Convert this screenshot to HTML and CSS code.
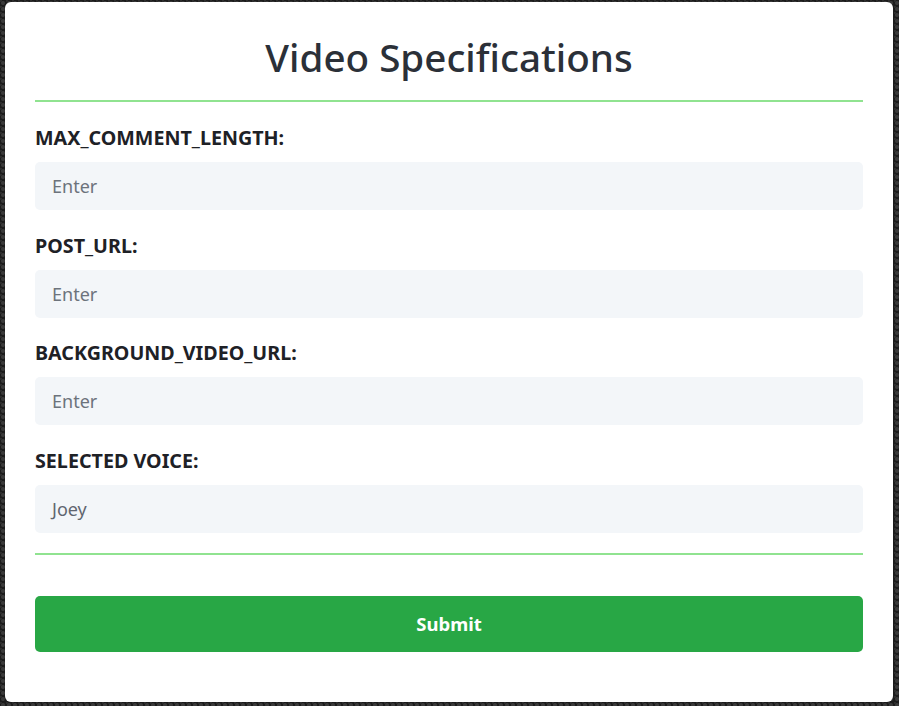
FILE: index.html
```html
<!DOCTYPE html>
<html lang="en">
<head>
<meta charset="utf-8">
<title>Video Specifications</title>
<link rel="stylesheet" href="styles.css">
</head>
<body>
<div class="card">
  <h1 class="title">Video Specifications</h1>
  <hr class="rule">
  <form class="form">
    <div class="group">
      <label class="label" for="f1">MAX_COMMENT_LENGTH:</label>
      <input class="input" id="f1" type="text" placeholder="Enter">
    </div>
    <div class="group">
      <label class="label" for="f2">POST_URL:</label>
      <input class="input" id="f2" type="text" placeholder="Enter">
    </div>
    <div class="group">
      <label class="label" for="f3">BACKGROUND_VIDEO_URL:</label>
      <input class="input" id="f3" type="text" placeholder="Enter">
    </div>
    <div class="group">
      <label class="label" for="f4">SELECTED VOICE:</label>
      <div class="input select">Joey</div>
    </div>
    <hr class="rule rule-bottom">
    <button class="submit" type="button">Submit</button>
  </form>
</div>
</body>
</html>
```

FILE: styles.css
```css
* { box-sizing: border-box; }
html, body { margin: 0; }
body {
  width: 899px;
  height: 706px;
  overflow: hidden;
  padding: 2px 0 0 5px;
  background-color: #1c1c1c;
  background-image:
    radial-gradient(circle at 50% 50%, #3a3a3a 0 1.5px, transparent 2.5px),
    radial-gradient(circle at 0 0, #2e2e2e 0 1.5px, transparent 2.5px);
  background-size: 6px 6px;
  font-family: "Noto Sans", "Open Sans", sans-serif;
}
.card {
  width: 888px;
  height: 700px;
  background: #fff;
  border-radius: 6px;
  padding: 31px 30px 0;
}
.title {
  margin: 0;
  font-size: 38.6px;
  line-height: 48px;
  font-weight: 500;
  text-align: center;
  color: #2b3038;
}
.rule {
  margin: 19px 0 0;
  border: 0;
  height: 2px;
  background: #90e390;
}
.form { display: flex; flex-direction: column; }
.group { display: flex; flex-direction: column; margin-top: 24px; }
.group + .group { margin-top: 23.6px; }
.label {
  font-size: 19.7px;
  line-height: 24px;
  font-weight: 700;
  color: #1e2126;
  margin-bottom: 12px;
}
.input {
  height: 48px;
  border: 0;
  border-radius: 5px;
  background: #f3f6f9;
  padding: 0 17px;
  font: inherit;
  font-size: 18px;
  color: #5f6670;
  outline: none;
  display: flex;
  align-items: center;
}
.input::placeholder { color: #6c737c; }
.rule-bottom { margin-top: 20px; }
.submit {
  margin-top: 41px;
  height: 56px;
  border: 0;
  border-radius: 5px;
  background: #28a745;
  color: #fff;
  font: inherit;
  font-size: 18.5px;
  font-weight: 700;
  cursor: pointer;
}
```
